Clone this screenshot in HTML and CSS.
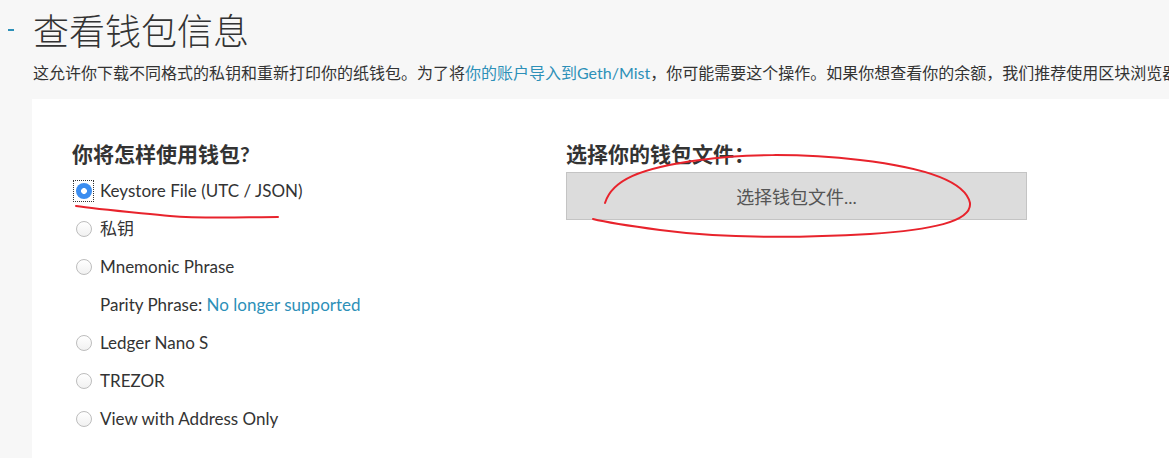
FILE: index.html
```html
<!DOCTYPE html>
<html lang="zh">
<head>
<meta charset="utf-8">
<title>查看钱包信息</title>
<link rel="stylesheet" href="styles.css">
</head>
<body>
<div class="page">
  <header class="head">
    <span class="dash"></span>
    <h1 class="title">查看钱包信息</h1>
  </header>
  <p class="intro">这允许你下载不同格式的私钥和重新打印你的纸钱包。为了将<a class="link" href="#">你的账户导入到Geth/Mist</a>，你可能需要这个操作。如果你想查看你的余额，我们推荐使用区块浏览器</p>
  <section class="panel">
    <div class="col-left">
      <h2 class="sub">你将怎样使用钱包?</h2>
      <ul class="options">
        <li class="opt"><span class="focus"><span class="radio checked"></span></span><span class="label">Keystore File (UTC / JSON)</span></li>
        <li class="opt"><span class="radio"></span><span class="label">私钥</span></li>
        <li class="opt"><span class="radio"></span><span class="label">Mnemonic Phrase</span></li>
        <li class="opt note"><span class="label">Parity Phrase: <a class="link" href="#">No longer supported</a></span></li>
        <li class="opt"><span class="radio"></span><span class="label">Ledger Nano S</span></li>
        <li class="opt"><span class="radio"></span><span class="label">TREZOR</span></li>
        <li class="opt"><span class="radio"></span><span class="label">View with Address Only</span></li>
      </ul>
    </div>
    <div class="col-right">
      <h2 class="sub">选择你的钱包文件：</h2>
      <button class="file-btn" type="button">选择钱包文件...</button>
    </div>
  </section>
</div>
<svg class="marks" width="1169" height="458" viewBox="0 0 1169 458" aria-hidden="true">
  <path d="M76,206 C 95,209 130,212 170,216 C 205,219 245,217 278,217" />
  <path d="M605,203 C 612,180 640,168 700,160 C 740,154 800,153 860,160 C 920,167 965,180 970,203 C 972,222 930,230 870,234 C 800,238 720,238 660,230 C 630,226 605,222 593,219" />
</svg>
</body>
</html>
```
FILE: styles.css
```css
html, body {
  margin: 0;
  padding: 0;
}
body {
  background: #f7f7f7;
  font-family: Lato, "Noto Sans CJK SC", sans-serif;
  color: #333;
  width: 1169px;
  height: 458px;
  overflow: hidden;
  position: relative;
}
.page {
  display: flex;
  flex-direction: column;
  height: 458px;
}
.head {
  display: flex;
  align-items: center;
  padding: 6px 0 0 8px;
  height: 46px;
}
.dash {
  width: 6px;
  height: 2px;
  background: #2d90b8;
  margin-right: 19px;
  margin-top: 2px;
}
.title {
  margin: 0;
  font-family: "Noto Sans CJK SC", sans-serif;
  font-weight: 300;
  font-size: 36px;
  line-height: 46px;
  color: #333;
}
.intro {
  margin: 9px 0 0 33px;
  font-family: Lato, "Noto Sans CJK SC", sans-serif;
  font-size: 16px;
  line-height: 24px;
  white-space: nowrap;
  overflow: hidden;
  color: #333;
}
.link {
  color: #2d90b8;
  text-decoration: none;
}
.panel {
  margin: 14px 0 0 32px;
  background: #fff;
  flex: 1;
  display: flex;
  padding: 44px 0 0 40px;
}
.col-left {
  width: 494px;
}
.col-right {
  width: 461px;
}
.sub {
  margin: 0;
  font-family: Lato, "Noto Sans CJK SC", sans-serif;
  font-size: 21px;
  line-height: 22px;
  font-weight: 700;
  color: #333;
}
.options {
  list-style: none;
  margin: 7px 0 0 0;
  padding: 0;
}
.opt {
  height: 38px;
  display: flex;
  align-items: center;
  padding-left: 4px;
  font-size: 17px;
  color: #333;
}
.opt.note {
  padding-left: 28px;
}
.radio {
  box-sizing: border-box;
  width: 16px;
  height: 16px;
  border-radius: 50%;
  border: 1px solid #bdbdbd;
  background: linear-gradient(#fff, #f1f1f1);
  margin-right: 8px;
  flex: none;
}
.focus {
  display: flex;
  align-items: center;
  justify-content: center;
  width: 21px;
  height: 22px;
  margin: 0 6px 0 -3px;
  box-sizing: border-box;
  border: 1px dotted #333;
}
.focus .radio {
  margin-right: 0;
}
.radio.checked {
  border: none;
  background: radial-gradient(circle, #fff 0 2.6px, #3b8df0 3.2px);
}
.label {
  line-height: 20px;
}
.file-btn {
  margin-top: 7px;
  width: 461px;
  height: 48px;
  background: #dcdcdc;
  border: 1px solid #c4c4c4;
  font-family: Lato, "Noto Sans CJK SC", sans-serif;
  font-size: 18px;
  color: #555;
  padding: 0;
}
.marks {
  position: absolute;
  top: 0;
  left: 0;
  pointer-events: none;
}
.marks path {
  fill: none;
  stroke: #e8232c;
  stroke-width: 2;
  stroke-linecap: round;
}
```
